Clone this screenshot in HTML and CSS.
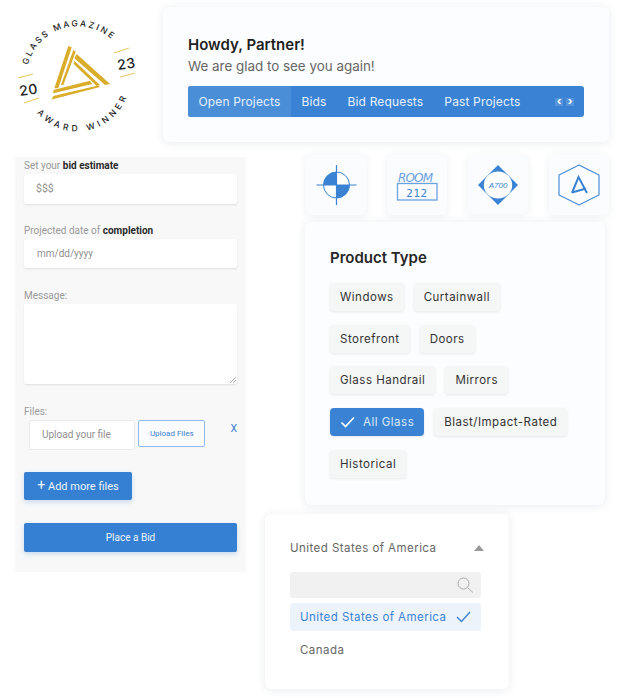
FILE: index.html
```html
<!DOCTYPE html>
<html lang="en">
  <head>
    <meta charset="UTF-8" />
    <meta name="viewport" content="width=device-width, initial-scale=1.0" />
    <title>Partner</title>
    <link rel="stylesheet" href="styles.css">
  </head>
  <body>
    <div class="canvas">
      <!-- award badge -->
      <svg class="badge" width="160" height="150" viewBox="0 0 160 150">
        <defs>
          <path id="arcTop" d="M28 65 A51 51 0 0 1 117 45" />
          <path id="arcBottom" d="M37 113 A53 53 0 0 0 129 89" />
        </defs>
        <text class="badge-arc badge-arc-top"><textPath href="#arcTop">GLASS MAGAZINE</textPath></text>
        <text class="badge-arc badge-arc-bottom"><textPath href="#arcBottom">AWARD WINNER</textPath></text>
        <text class="badge-year" x="20" y="96" transform="rotate(-8 20 96)">20</text>
        <text class="badge-year" x="118" y="70" transform="rotate(-8 118 70)">23</text>
        <path class="badge-rule" d="M18 78 L33 74 M24 103 L39 98 M114 53 L129 48 M120 77 L135 73" />
        <g class="badge-tri">
          <polygon points="68.3,46 71.7,47.3 58.3,88.3 54.3,88.3" />
          <polygon points="73.3,50 75.7,51.7 63.3,85 61,85" />
          <polygon points="76.7,54 110,84 105,85 74.3,58.3" />
          <polygon points="74.3,60.7 100,85 96.7,86 73.7,64" />
          <polygon points="53.3,90 90,80.7 92.3,84 53.3,93.3" />
          <polygon points="53.3,96 98,85.5 100,87 51.7,99.5" />
        </g>
      </svg>

      <!-- welcome card -->
      <section class="card hero">
        <h2 class="hero-title">Howdy, Partner!</h2>
        <p class="hero-sub">We are glad to see you again!</p>
        <nav class="tabs">
          <a class="tab tab-active">Open Projects</a>
          <a class="tab">Bids</a>
          <a class="tab">Bid Requests</a>
          <a class="tab">Past Projects</a>
          <span class="tab-arrows">
            <span class="tab-arrow">&#8249;</span>
            <span class="tab-arrow">&#8250;</span>
          </span>
        </nav>
      </section>

      <!-- bid form -->
      <form class="bid">
        <label class="bid-label">Set your <b>bid estimate</b></label>
        <div class="field field-first">$$$</div>
        <label class="bid-label">Projected date of <b>completion</b></label>
        <div class="field field-date">mm/dd/yyyy</div>
        <label class="bid-label">Message:</label>
        <div class="field-area">
          <svg class="grip" width="6" height="6" viewBox="0 0 6 6"><path d="M0 6 L6 0 M3 6 L6 3" /></svg>
        </div>
        <label class="bid-label">Files:</label>
        <div class="file-row">
          <div class="file-name">Upload your file</div>
          <div class="file-btn">Upload Files</div>
          <span class="file-x">X</span>
        </div>
        <div class="add-files"><span class="add-plus">+</span> Add more files</div>
        <div class="place-bid">Place a Bid</div>
      </form>

      <!-- drawing symbols -->
      <div class="symbols">
        <div class="symbol">
          <svg width="60" height="60" viewBox="0 0 60 60">
            <circle cx="30.5" cy="30" r="13" fill="#fff" stroke="#3a83d4" stroke-width="1" />
            <path d="M30.5 30 V17 A13 13 0 0 0 17.5 30 Z M30.5 30 V43 A13 13 0 0 0 43.5 30 Z" fill="#3a83d4" />
            <path d="M30.5 10 V50 M10.5 30 H50.5" stroke="#3a83d4" stroke-width="1.2" />
          </svg>
        </div>
        <div class="symbol">
          <svg width="60" height="60" viewBox="0 0 60 60">
            <text class="symbol-room" x="11" y="27" textLength="35">ROOM</text>
            <rect x="10.5" y="28.5" width="39.5" height="16.5" fill="none" stroke="#6ba2e0" stroke-width="1.3" />
            <text class="symbol-num" x="30" y="41.5">212</text>
          </svg>
        </div>
        <div class="symbol symbol-small">
          <svg width="60" height="58" viewBox="0 0 60 58">
            <polygon points="30,9 50,29 30,49 10,29" fill="#3a83d4" />
            <ellipse cx="30" cy="29" rx="14.2" ry="13.6" fill="#fff" />
            <text class="symbol-a700" x="30" y="32">A700</text>
          </svg>
        </div>
        <div class="symbol">
          <svg width="60" height="60" viewBox="0 0 60 60">
            <polygon points="30,10 50,20 50,40 30,50 10,40 10,20" fill="none" stroke="#3a83d4" stroke-width="1.1" />
            <path d="M23 38 L29.5 22 L38 38 M23 37.5 L37 33.5" fill="none" stroke="#3a83d4" stroke-width="2" />
          </svg>
        </div>
      </div>

      <!-- product type -->
      <section class="card products">
        <h3 class="products-title">Product Type</h3>
        <div class="chip-rows">
          <div class="chip-row">
            <div class="chip">Windows</div>
            <div class="chip">Curtainwall</div>
          </div>
          <div class="chip-row">
            <div class="chip">Storefront</div>
            <div class="chip">Doors</div>
          </div>
          <div class="chip-row">
            <div class="chip">Glass Handrail</div>
            <div class="chip">Mirrors</div>
          </div>
          <div class="chip-row">
            <div class="chip chip-on">
              <svg width="16" height="12" viewBox="0 0 16 12"><path d="M1.5 6.5 L5.5 10.5 L14 1.5" /></svg>
              All Glass
            </div>
            <div class="chip">Blast/Impact-Rated</div>
          </div>
          <div class="chip-row">
            <div class="chip">Historical</div>
          </div>
        </div>
      </section>

      <!-- country select -->
      <section class="card country">
        <div class="country-head">
          <span>United States of America</span>
          <span class="caret"></span>
        </div>
        <div class="country-search">
          <svg width="17" height="16" viewBox="0 0 17 16"><circle cx="6.5" cy="6.5" r="5.5" /><path d="M10.5 10.5 L16 15.5" /></svg>
        </div>
        <div class="country-opt country-opt-on">
          <span>United States of America</span>
          <svg width="15" height="12" viewBox="0 0 15 12"><path d="M1 6 L5.5 10.5 L14 1" /></svg>
        </div>
        <div class="country-opt">Canada</div>
      </section>
    </div>
  </body>
</html>
```

FILE: styles.css
```css
* {
  margin: 0;
  padding: 0;
  box-sizing: border-box;
}
html,
body {
  background: #fff;
  overflow: hidden;
}
body {
  font-family: "Inter", "Open Sans", sans-serif;
  color: #222;
}

/* collage: each piece sits on a free canvas */
.canvas {
  position: relative;
  width: 623px;
  height: 700px;
  overflow: hidden;
}
.badge,
.hero,
.bid,
.symbols,
.products,
.country {
  position: absolute;
}

.card {
  background: #fcfdfe;
  border-radius: 6px;
  box-shadow: 0 1px 10px rgba(40, 60, 90, 0.1);
}

/* badge */
.badge {
  left: 0;
  top: 0;
}
.badge-arc {
  font-family: "Inter", sans-serif;
  font-size: 8.5px;
  font-weight: 500;
  fill: #222;
}
.badge-arc-top {
  letter-spacing: 2.2px;
}
.badge-arc-bottom {
  letter-spacing: 3.7px;
}
.badge-year {
  font-family: "Inter", sans-serif;
  font-size: 14px;
  font-weight: 500;
  letter-spacing: 0.4px;
  fill: #222;
}
.badge-rule {
  stroke: #e6c65a;
  stroke-width: 1;
  fill: none;
}
.badge-tri polygon {
  fill: #d9ac2a;
}

/* welcome */
.hero {
  left: 163px;
  top: 7px;
  width: 446px;
  height: 135px;
  padding: 29px 25px 0;
}
.hero-title {
  font-size: 15px;
  line-height: 18px;
  font-weight: 600;
  color: #1f1f1f;
}
.hero-sub {
  margin-top: 3px;
  font-size: 13.4px;
  line-height: 19px;
  color: #666;
}
.tabs {
  display: flex;
  align-items: stretch;
  height: 31px;
  margin-top: 10px;
  background: #3a83d4;
  border-radius: 3px;
  overflow: hidden;
  color: #e8f1fb;
  font-size: 12px;
}
.tab {
  display: flex;
  align-items: center;
  padding: 0 10.5px;
  letter-spacing: 0.15px;
}
.tab-active {
  background: #4a8ed8;
}
.tab-arrows {
  display: flex;
  align-items: center;
  gap: 3px;
  margin-left: auto;
  padding-right: 10px;
}
.tab-arrow {
  width: 8px;
  height: 8px;
  font-size: 11px;
  line-height: 7px;
  text-align: center;
  font-weight: 700;
  background: #5594db;
  color: #fff;
}

/* bid form */
.bid {
  left: 15px;
  top: 157px;
  width: 231px;
  height: 415px;
  padding: 2px 9px 0;
  background: #f8f8f8;
  border-radius: 2px;
  font-family: "Roboto", sans-serif;
}
.bid-label {
  display: block;
  font-size: 10px;
  line-height: 13px;
  color: #9a9a9a;
}
.bid-label b {
  font-weight: 700;
  color: #2a2a2a;
}
.field {
  height: 30px;
  margin: 2px 0 20px;
  padding-left: 12px;
  background: #fff;
  border-radius: 2px;
  box-shadow: 0 1px 2px rgba(0, 0, 0, 0.1);
  font-size: 10.5px;
  line-height: 30px;
  color: #8f8f8f;
}
.field-date {
  height: 29px;
  margin: 2px 0 21px;
  padding-left: 13px;
  font-size: 10px;
  line-height: 29px;
}
.field-area {
  position: relative;
  height: 80px;
  margin: 2px 0 21px;
  background: #fff;
  border-radius: 2px;
  box-shadow: 0 1px 2px rgba(0, 0, 0, 0.1);
}
.grip {
  position: absolute;
  right: 1px;
  bottom: 1px;
  stroke: #888;
  stroke-width: 0.7;
}
.file-row {
  display: flex;
  align-items: flex-start;
  margin: 2px 0 0 5px;
}
.file-name {
  width: 107px;
  height: 30px;
  padding-left: 12px;
  background: #fff;
  border: 1px solid #e9e9e9;
  border-radius: 2px;
  font-size: 10px;
  line-height: 28px;
  color: #8f8f8f;
}
.file-btn {
  width: 68px;
  height: 27px;
  margin-left: 3px;
  background: #fafbfc;
  border: 1px solid #8fbaea;
  border-radius: 2px;
  text-align: center;
  font-size: 8px;
  line-height: 26px;
  color: #3a83d4;
}
.file-x {
  margin: 2px 0 0 25px;
  font-size: 10.5px;
  color: #3a83d4;
}
.add-files {
  width: 108px;
  height: 28px;
  margin-top: 22px;
  background: #3580d2;
  border-radius: 2px;
  box-shadow: 0 2px 5px rgba(53, 128, 210, 0.25);
  text-align: center;
  font-size: 11px;
  line-height: 29px;
  color: #eef5fc;
}
.add-plus {
  font-size: 14px;
  line-height: 14px;
}
.place-bid {
  height: 29px;
  margin-top: 23px;
  background: #3580d2;
  border-radius: 2px;
  box-shadow: 0 2px 5px rgba(53, 128, 210, 0.25);
  text-align: center;
  font-size: 10px;
  line-height: 29px;
  color: #eef5fc;
}

/* symbols */
.symbols {
  left: 306px;
  top: 155px;
  display: flex;
  align-items: flex-start;
  gap: 21px;
}
.symbol {
  width: 60px;
  height: 60px;
  background: #fbfcfe;
  border-radius: 5px;
  box-shadow: 0 1px 8px rgba(40, 60, 90, 0.08);
}
.symbol svg {
  display: block;
}
.symbol-small {
  height: 58px;
  margin-top: 1px;
}
.symbol-room {
  font-family: "DejaVu Sans", sans-serif;
  font-size: 12px;
  font-style: italic;
  fill: #6ba2e0;
}
.symbol-num {
  font-family: "DejaVu Sans", sans-serif;
  font-size: 10.5px;
  letter-spacing: 0.5px;
  text-anchor: middle;
  fill: #3a83d4;
}
.symbol-a700 {
  font-family: "Liberation Sans", sans-serif;
  font-size: 8px;
  font-style: italic;
  text-anchor: middle;
  fill: #3a83d4;
}

/* product type */
.products {
  left: 305px;
  top: 222px;
  width: 300px;
  height: 283px;
  padding: 27px 25px 0;
}
.products-title {
  font-size: 15px;
  line-height: 18px;
  font-weight: 600;
  color: #262626;
}
.chip-rows {
  display: flex;
  flex-direction: column;
  gap: 13.7px;
  margin-top: 16px;
}
.chip-row {
  display: flex;
  gap: 10px;
}
.chip {
  display: flex;
  align-items: center;
  height: 28px;
  padding: 0 10px;
  background: #f5f6f6;
  border-radius: 4px;
  box-shadow: 0 1px 3px rgba(0, 0, 0, 0.09);
  font-size: 11.5px;
  letter-spacing: 0.5px;
  color: #333;
}
.chip-on {
  gap: 7px;
  background: #3a83d4;
  color: #dbe9f8;
}
.chip-on svg {
  fill: none;
  stroke: #fff;
  stroke-width: 1.7;
}

/* country select */
.country {
  left: 265px;
  top: 514px;
  width: 244px;
  height: 175px;
  padding: 0 28px 0 25px;
  background: #fff;
  font-size: 11.5px;
  letter-spacing: 0.45px;
  color: #666;
}
.country-head {
  display: flex;
  align-items: center;
  justify-content: space-between;
  height: 34px;
  margin-top: 17px;
}
.caret {
  width: 0;
  height: 0;
  margin: 0 -3px 0 0;
  border-left: 5px solid transparent;
  border-right: 5px solid transparent;
  border-bottom: 6px solid #999;
}
.country-search {
  display: flex;
  align-items: center;
  justify-content: flex-end;
  height: 26px;
  margin-top: 7px;
  padding-right: 7px;
  background: #f1f1f1;
  border-radius: 3px;
}
.country-search svg {
  fill: none;
  stroke: #aaa;
  stroke-width: 1;
}
.country-opt {
  display: flex;
  align-items: center;
  justify-content: space-between;
  height: 28px;
  padding: 0 10px;
  margin-top: 5px;
}
.country-opt-on {
  background: #edf3fb;
  border-radius: 3px;
  color: #3a83d4;
}
.country-opt-on svg {
  fill: none;
  stroke: #3a83d4;
  stroke-width: 1.4;
}
```
